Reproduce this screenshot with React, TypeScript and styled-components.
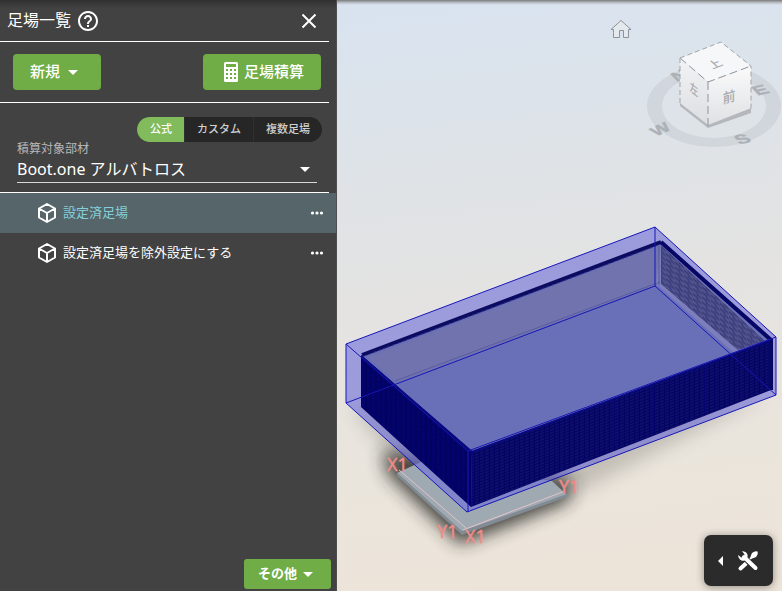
import React, { useState } from "react";
import styled, { createGlobalStyle, css } from "styled-components";

const GlobalStyle = createGlobalStyle`
  *, *::before, *::after { box-sizing: border-box; }
  body {
    margin: 0;
    background: #424242;
    color: #fff;
    font-family: "Noto Sans CJK JP", "Noto Sans", sans-serif;
  }
  button, select { font-family: inherit; color: inherit; }
`;

const Layout = styled.div`
  display: grid;
  grid-template-columns: minmax(0, 337fr) minmax(0, 445fr);
  min-height: 100vh;
`;

const Sidebar = styled.aside`
  display: flex;
  flex-direction: column;
  background: linear-gradient(#303030, #424242 8px);
  border-right: 1px solid #4e4e4e;
`;

const Section = styled.div`
  margin-right: 7px;
  border-bottom: 1px solid #fff;
`;

const Header = styled(Section)`
  display: flex;
  align-items: center;
  height: 42px;
  padding: 0 8px 0 7px;
`;

const Title = styled.h1`
  margin: 0 5px 4px 0;
  font-size: 16px;
  line-height: 24px;
  font-weight: 400;
`;

const IconButton = styled.button<{ $push?: boolean }>`
  display: grid;
  place-items: center;
  padding: 0;
  border: 0;
  background: none;
  cursor: pointer;
  ${(p) => p.$push && css`margin-left: auto;`}
`;

const Toolbar = styled(Section)`
  display: flex;
  justify-content: space-between;
  padding: 12px 8px 12px 13px;
`;

const GreenButton = styled.button<{ $small?: boolean }>`
  display: flex;
  align-items: center;
  gap: 6px;
  height: ${(p) => (p.$small ? 30 : 36)}px;
  padding: ${(p) => (p.$small ? "0 18px 0 14px" : "0 17px")};
  border: 0;
  border-radius: ${(p) => (p.$small ? 3 : 4)}px;
  background: #70ad47;
  font-size: ${(p) => (p.$small ? 13 : 15)}px;
  font-weight: ${(p) => (p.$small ? 700 : 500)};
  cursor: pointer;
`;

const Caption = styled.span`
  padding-bottom: 3px;
`;

const NewButton = styled(GreenButton)`
  gap: 8px;
  padding-right: 23px;
`;

const EstimateButton = styled(GreenButton)`
  padding-left: 21px;
`;

const Filters = styled(Section)`
  display: flex;
  flex-direction: column;
  padding: 14px 12px 9px 17px;
`;

const Segments = styled.div`
  display: flex;
  align-self: flex-end;
  margin-right: -5px;
  height: 25px;
  border-radius: 13px;
  overflow: hidden;
  background: #262626;
`;

const Segment = styled.button<{ $active: boolean }>`
  padding: 0 12px 3px;
  border: 0;
  border-left: 1px solid #303030;
  background: ${(p) => (p.$active ? "#82bb5c" : "transparent")};
  color: ${(p) => (p.$active ? "#fff" : "#d0d0d0")};
  font-size: 11px;
  font-weight: 500;
  cursor: pointer;
  &:first-child {
    padding-left: 13px;
    border-left: 0;
  }
`;

const FieldLabel = styled.label`
  margin-top: -3px;
  color: #b8b8b8;
  font-size: 12px;
  line-height: 18px;
`;

const SelectBox = styled.div`
  display: grid;
  grid-template-columns: 1fr 24px;
  align-items: center;
  height: 26px;
  border-bottom: 1px solid #d8d8d8;
  & > * { grid-row: 1; }
  & > svg {
    grid-column: 2;
    justify-self: center;
    pointer-events: none;
  }
`;

const Select = styled.select`
  grid-column: 1 / 3;
  appearance: none;
  width: 100%;
  height: 25px;
  padding: 0 0 2px;
  border: 0;
  outline: 0;
  background: transparent;
  font-family: "Noto Sans", "Noto Sans CJK JP", sans-serif;
  font-size: 16px;
  option { background: #424242; }
`;

const List = styled.ul`
  margin: 0;
  padding: 0;
  list-style: none;
`;

const Item = styled.li<{ $active: boolean }>`
  display: flex;
  align-items: center;
  height: 40px;
  padding: 0 7px 0 35px;
  background: ${(p) => (p.$active ? "#566569" : "transparent")};
  color: ${(p) => (p.$active ? "#84d0d8" : "#fff")};
`;

const ItemName = styled.button`
  display: flex;
  align-items: center;
  flex: 1;
  gap: 4px;
  padding: 0;
  border: 0;
  background: none;
  font-size: 13px;
  text-align: left;
  cursor: pointer;
  svg { color: #fff; flex: none; }
`;

const MoreButton = styled(IconButton)`
  color: #fff;
`;

const Footer = styled.footer`
  display: flex;
  justify-content: flex-end;
  margin-top: auto;
  padding: 0 5px 2px;
`;

const Viewer = styled.main`
  display: grid;
  min-height: 0;
  & > * { grid-area: 1 / 1; }
`;

const Scene = styled.svg`
  display: block;
  width: 100%;
  height: 100%;
`;

const ToolsButton = styled.button`
  place-self: end;
  display: flex;
  align-items: center;
  justify-content: flex-end;
  gap: 14px;
  width: 69px;
  height: 51px;
  margin: 0 9px 5px;
  padding: 0 14px;
  border: 0;
  border-radius: 7px;
  background: #2b2b2b;
  box-shadow: 0 1px 8px rgba(0, 0, 0, 0.4);
  cursor: pointer;
`;

const Caret = () => (
  <svg width="10" height="5" viewBox="0 0 10 5" aria-hidden="true">
    <path d="M0 0h10L5 5z" fill="#fff" />
  </svg>
);

const HelpIcon = () => (
  <svg width="24" height="24" viewBox="0 0 24 24" fill="currentColor" aria-hidden="true">
    <path d="M11 18h2v-2h-2v2zm1-16C6.480 2 2 6.480 2 12s4.480 10 10 10 10-4.480 10-10S17.520 2 12 2zm0 18c-4.410 0-8-3.590-8-8s3.590-8 8-8 8 3.590 8 8-3.590 8-8 8zm0-14c-2.210 0-4 1.790-4 4h2c0-1.100.9-2 2-2s2 .9 2 2c0 2-3 1.750-3 5h2c0-2.250 3-2.500 3-5 0-2.210-1.790-4-4-4z" />
  </svg>
);

const CloseIcon = () => (
  <svg width="24" height="24" viewBox="0 0 24 24" aria-hidden="true">
    <path d="M5.500 5.500l13 13M18.500 5.500l-13 13" stroke="currentColor" strokeWidth="2" />
  </svg>
);

const CalculatorIcon = () => (
  <svg width="14" height="20" viewBox="0 0 14 20" aria-hidden="true">
    <rect width="14" height="20" rx="1.500" fill="#fff" />
    <rect x="2" y="2" width="10" height="3" fill="#70ad47" />
    {[7, 11, 15].map((y) =>
      [2, 6, 10].map((x) => (
        <rect key={`${x}-${y}`} x={x} y={y} width="2" height="2" fill="#70ad47" />
      ))
    )}
  </svg>
);

const BoxIcon = () => (
  <svg width="24" height="24" viewBox="0 0 24 24" fill="none" stroke="currentColor" strokeWidth="2" strokeLinejoin="round" aria-hidden="true">
    <path d="M12 3l8 4.500v9L12 21l-8-4.500v-9zM4 7.500l8 4.500 8-4.500M12 12v9" />
  </svg>
);

const MoreIcon = () => (
  <svg width="24" height="24" viewBox="0 0 24 24" fill="currentColor" aria-hidden="true">
    <circle cx="7.500" cy="12" r="1.600" />
    <circle cx="12" cy="12" r="1.600" />
    <circle cx="16.500" cy="12" r="1.600" />
  </svg>
);

const ToolsIcon = () => (
  <svg width="22" height="22" viewBox="0 0 22 22" aria-hidden="true">
    <path d="M3.500 18.500l5.500-5" stroke="#fff" strokeWidth="4" strokeLinecap="round" />
    <path d="M9 13l6-6" stroke="#fff" strokeWidth="2" />
    <path d="M13.500 6.500l1.500-3.500q3-2.500 5.500-1.500 1 2.500-1.500 5.500l-3.500 1.500z" fill="#fff" />
    <path d="M7 7l13 13" stroke="#2b2b2b" strokeWidth="6" />
    <path d="M7 7l11.500 11" stroke="#fff" strokeWidth="4" strokeLinecap="round" />
    <path d="M5 1.200a5 5 0 0 1 5.500 6.300L7.500 10.500A5 5 0 0 1 1.200 5l3 2.500 2.600-.7.700-2.600z" fill="#fff" />
  </svg>
);

const ArrowLeft = () => (
  <svg width="5" height="10" viewBox="0 0 5 10" aria-hidden="true">
    <path d="M5 0v10L0 5z" fill="#fff" />
  </svg>
);

const ViewCube = () => (
  <g fontFamily="Liberation Sans, sans-serif" fontWeight="700">
    <path
      fillRule="evenodd"
      fill="#cbd0d5"
      opacity="0.700"
      d="M647 106a67 41 0 1 0 134 0a67 41 0 1 0-134 0zM662 106a52 32 0 1 0 104 0a52 32 0 1 0-104 0z"
    />
    <g fill="#adb1b6" stroke="#adb1b6" strokeWidth=".5" fontSize="18" textAnchor="middle">
      <text transform="matrix(.95 -.45 .6 .6 664 133)">W</text>
      <text transform="matrix(1.100 -.25 .6 .65 746 143)">S</text>
      <text transform="matrix(1.100 -.25 .6 .65 764 94)">E</text>
      <text transform="matrix(.95 -.45 .6 .6 683 79)">N</text>
    </g>
    <path d="M680 102l28 22 43-16v5l-43 15-28-22z" fill="#b4b8bd" />
    <path d="M680 58l41-16 30 24-43 16z" fill="#f5f7f9" />
    <path d="M680 58l28 24v43l-28-22z" fill="url(#cubeLeft)" />
    <path d="M708 82l43-16v42l-43 17z" fill="url(#cubeFront)" />
    <path d="M680 58l28 24 43-16M708 82v45" fill="none" stroke="#8e9399" strokeDasharray="8 4" />
    <path d="M680 58l41-16 30 24v44M680 58v45" fill="none" stroke="#a0a5ab" strokeDasharray="5 3" />
    <g fill="#a6aaaf" fontFamily="Noto Sans CJK JP, sans-serif" fontWeight="500" fontSize="14" textAnchor="middle">
      <text transform="matrix(.8 -.32 .6 .55 718 67)">上</text>
      <text transform="matrix(.6 .45 0 .9 694 94)">左</text>
      <text transform="matrix(.9 -.25 0 1 729 102)">前</text>
    </g>
  </g>
);

const ModelScene = () => (
  <Scene viewBox="337 0 445 591" preserveAspectRatio="xMidYMid slice" role="img" aria-label="足場モデル">
    <defs>
      <linearGradient id="sky" x1=".46" y1="0" x2=".54" y2="1">
        <stop offset="0" stopColor="#d9e3ef" />
        <stop offset=".2" stopColor="#dde3e9" />
        <stop offset=".48" stopColor="#e4e3e2" />
        <stop offset=".78" stopColor="#eae5dc" />
        <stop offset="1" stopColor="#ede4d9" />
      </linearGradient>
      <linearGradient id="topShade" x1="0" y1="0" x2="0" y2="1">
        <stop offset="0" stopColor="#777" />
        <stop offset="1" stopColor="#aaa" stopOpacity="0" />
      </linearGradient>
      <linearGradient id="cubeLeft" x1="0" y1="0" x2="0" y2="1">
        <stop offset="0" stopColor="#f2f3f5" />
        <stop offset="1" stopColor="#dcdee1" />
      </linearGradient>
      <linearGradient id="cubeFront" x1="0" y1="0" x2="0" y2="1">
        <stop offset="0" stopColor="#fafafa" />
        <stop offset="1" stopColor="#dfe1e4" />
      </linearGradient>
      <filter id="soft" x="-30%" y="-30%" width="160%" height="160%">
        <feGaussianBlur stdDeviation="9" />
      </filter>
      <pattern id="meshFront" width="5" height="3" patternUnits="userSpaceOnUse" patternTransform="matrix(1 -.37 0 1 0 0)">
        <rect width="5" height="3" fill="#020260" />
        <path d="M0 1h4" stroke="#20207e" strokeWidth=".7" />
      </pattern>
      <pattern id="meshLeft" width="5" height="5" patternUnits="userSpaceOnUse" patternTransform="matrix(1 .88 0 1 0 0)">
        <rect width="5" height="5" fill="#020268" />
        <path d="M1 0v4" stroke="#000055" />
        <path d="M3 0v3" stroke="#050578" />
      </pattern>
      <pattern id="meshInner" width="9" height="5" patternUnits="userSpaceOnUse" patternTransform="matrix(1 .92 0 1 0 0)">
        <rect width="9" height="5" fill="#4a4c88" />
        <path d="M0 1h5M4 3h4" stroke="#303270" />
        <path d="M6 1h3M0 4h3" stroke="#5c5e99" />
      </pattern>
    </defs>

    <rect x="337" width="445" height="591" fill="url(#sky)" />
    <rect x="337" width="445" height="5" fill="url(#topShade)" />

    <path d="M613.500 32.500v-3h-2.500l10-9 10 9h-2.500v8h-5v-7h-4v7h-6z" fill="#e5e8ec" stroke="#8c9299" strokeLinejoin="round" />
    <ViewCube />

    {/* Ground slab and its shadow */}
    <path d="M350 407l112 130 115-44 190-98-200 40z" fill="#3b3833" opacity=".22" filter="url(#soft)" />
    <path d="M384 450l2 22 74 72 108-43 4-22z" fill="#2c2c28" opacity=".85" filter="url(#soft)" />
    <path d="M397 473l24-11 131 19 15 14-105 37z" fill="#9fa9b1" />
    <path d="M397 473l65 58 105-37v3l-105 38-65-59z" fill="#828b93" />
    <path d="M399 470l67 58M463 530l102-39" stroke="#e3c3cb" fill="none" />

    {/* Translucent bounding volume */}
    <path d="M346 344l309-117 121 110v58L467 512 346 403z" fill="#7070d8" opacity=".62" />

    {/* Interior walls and floor */}
    <path d="M361 357l300-115 110 98-299 111z" fill="#6a70b7" />
    <path d="M368 357l293-112v38L397 383z" fill="#7073ad" />
    <path d="M656 284l5-40 104 97-31 12z" fill="#7d7fbd" />
    <path d="M661 245l104 96-27 9-77-66z" fill="url(#meshInner)" />
    <path d="M395 381l265-99" fill="none" stroke="#5a5ca2" />
    <path d="M659 246v39" fill="none" stroke="#55589d" />

    {/* Outer scaffold faces */}
    <path d="M361 355l111 96-1 56-110-100z" fill="url(#meshLeft)" />
    <path d="M472 451l299-111v50L471 507z" fill="url(#meshFront)" />
    <path d="M362 355l299-113" fill="none" stroke="#0b0b60" strokeWidth="4" />
    <path d="M364 356l297-112" fill="none" stroke="#303090" strokeDasharray="3 2" strokeWidth="1" />
    <path d="M661 242l110 98v50" fill="none" stroke="#070765" strokeWidth="4" />
    <path d="M361 356l111 96 299-112" fill="none" stroke="#090980" strokeWidth="2" />
    <path d="M472 452v54M614 399v48M652 385v48M704 366v47" stroke="#070788" />

    {/* Bounding edges */}
    <path d="M346 344l309-117 121 110v58L467 512 346 403zM655 227v59L346 403M655 286l121 109M346 344l122 107v61M468 451l308-114" fill="none" stroke="#1717b8" strokeWidth="1" />

    <g fill="#f28b88" stroke="#f28b88" strokeWidth=".4" fontFamily="Noto Sans, sans-serif" fontSize="18">
      <text x="387" y="471">X1</text>
      <text x="559" y="493">Y1</text>
      <text x="437" y="538">Y1</text>
      <text x="465" y="543">X1</text>
    </g>
  </Scene>
);

const segments = ["公式", "カスタム", "複数足場"];
const items = ["設定済足場", "設定済足場を除外設定にする"];

export default function App() {
  const [segment, setSegment] = useState(0);
  const [selected, setSelected] = useState(0);

  return (
    <Layout>
      <GlobalStyle />
      <Sidebar>
        <Header as="header">
          <Title>足場一覧</Title>
          <IconButton aria-label="ヘルプ"><HelpIcon /></IconButton>
          <IconButton $push aria-label="閉じる"><CloseIcon /></IconButton>
        </Header>
        <Toolbar>
          <NewButton><Caption>新規</Caption><Caret /></NewButton>
          <EstimateButton><CalculatorIcon /><Caption>足場積算</Caption></EstimateButton>
        </Toolbar>
        <Filters>
          <Segments>
            {segments.map((name, i) => (
              <Segment key={name} $active={i === segment} aria-pressed={i === segment} onClick={() => setSegment(i)}>
                {name}
              </Segment>
            ))}
          </Segments>
          <FieldLabel htmlFor="material">積算対象部材</FieldLabel>
          <SelectBox>
            <Select id="material">
              <option>Boot.one アルバトロス</option>
            </Select>
            <Caret />
          </SelectBox>
        </Filters>
        <List>
          {items.map((name, i) => (
            <Item key={name} $active={i === selected}>
              <ItemName onClick={() => setSelected(i)}><BoxIcon /><Caption>{name}</Caption></ItemName>
              <MoreButton aria-label="メニュー"><MoreIcon /></MoreButton>
            </Item>
          ))}
        </List>
        <Footer>
          <GreenButton $small><Caption>その他</Caption><Caret /></GreenButton>
        </Footer>
      </Sidebar>
      <Viewer>
        <ModelScene />
        <ToolsButton aria-label="ツール">
          <ArrowLeft />
          <ToolsIcon />
        </ToolsButton>
      </Viewer>
    </Layout>
  );
}
